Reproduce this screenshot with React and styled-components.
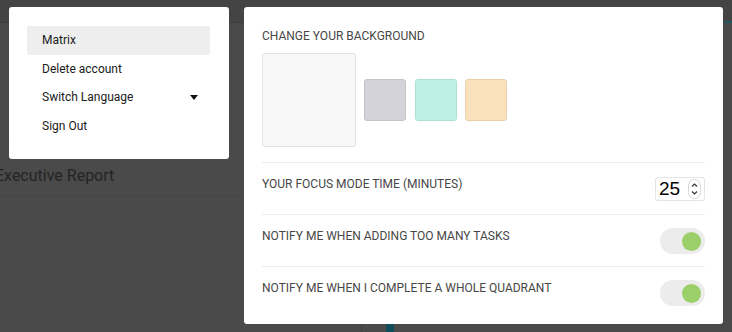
import React from 'react';
import styled, { createGlobalStyle } from 'styled-components';

const GlobalStyle = createGlobalStyle`
  html, body {
    margin: 0;
    padding: 0;
    background: #4a4a4a;
    font-family: Roboto, "Noto Sans", sans-serif;
    overflow: hidden;
  }
  * { box-sizing: border-box; }
`;

const Page = styled.div`
  width: 732px;
  height: 332px;
  position: relative;
  overflow: hidden;
  background: #4a4a4a;
`;

const Header = styled.div`
  height: 23px;
  background: #444444;
  border-bottom: 1px solid #3f3f3f;
  display: flex;
  justify-content: flex-end;
`;

const HeaderAccent = styled.div`
  width: 8px;
  height: 23px;
  border-bottom: 2px solid #1f5a60;
`;

const Body = styled.div`
  display: grid;
  grid-template-columns: 362px 1fr;
  height: 309px;
`;

const LeftColumn = styled.div`
  border-right: 1px solid #414141;
  display: flex;
  flex-direction: column;
  overflow: hidden;
`;

const Spacer = styled.div`
  height: 117px;
  border-bottom: 1px solid #464646;
`;

const ReportTitle = styled.h2`
  margin: 0 0 0 -5px;
  height: 56px;
  padding-top: 26px;
  font-size: 16px;
  font-weight: 400;
  line-height: 20px;
  color: #242424;
  border-bottom: 1px solid #444444;
`;

const RightColumn = styled.div`
  display: flex;
  align-items: flex-end;
  padding-left: 24px;
`;

const ChartBar = styled.div`
  width: 8px;
  height: 9px;
  background: #0f4d5c;
`;

const Overlay = styled.div`
  position: absolute;
  inset: 0;
  display: flex;
  align-items: flex-start;
  gap: 15px;
  padding: 7px 9px;
`;

const Menu = styled.div`
  width: 220px;
  height: 152px;
  background: #ffffff;
  border-radius: 3px;
  padding: 19px 19px 0 18px;
`;

const MenuItem = styled.div`
  height: 28.5px;
  display: flex;
  align-items: center;
  justify-content: space-between;
  padding: 0 12px 0 15px;
  border-radius: 2px;
  font-size: 12px;
  color: #212121;
  background: ${p => (p.$active ? '#eeeeee' : 'transparent')};
`;

const Caret = styled.span`
  width: 0;
  height: 0;
  border-left: 4px solid transparent;
  border-right: 4px solid transparent;
  border-top: 5px solid #111111;
`;

const Panel = styled.div`
  width: 479px;
  height: 317px;
  background: #ffffff;
  border-radius: 3px;
  padding: 22px 18px 6px;
`;

const SectionLabel = styled.div`
  font-size: 12px;
  line-height: 14px;
  color: #474747;
  text-transform: uppercase;
`;

const Swatches = styled.div`
  display: flex;
  align-items: center;
  gap: 8.5px;
  margin: 10px 0 15px;
`;

const Swatch = styled.div`
  width: ${p => (p.$large ? '93.5px' : '42px')};
  height: ${p => (p.$large ? '94px' : '42px')};
  border-radius: 3px;
  background: ${p => p.$color};
  border: 1px solid ${p => p.$border};
`;

const Row = styled.div`
  height: 52px;
  border-top: 1px solid #ececec;
  display: flex;
  align-items: center;
  justify-content: space-between;
`;

const RowLabel = styled(SectionLabel)`
  align-self: flex-start;
  margin-top: 14px;
`;

const NumberBox = styled.div`
  width: 50px;
  height: 24px;
  border: 1px solid #e4e4e4;
  border-radius: 3px;
  display: flex;
  align-items: center;
  justify-content: space-between;
  padding: 0 3px 0 3px;
  margin-top: 1px;
`;

const NumberValue = styled.span`
  font-family: "Liberation Sans", Arial, sans-serif;
  font-size: 19px;
  color: #000000;
`;

const Spinner = styled.svg`
  width: 13px;
  height: 20px;
`;

const Toggle = styled.div`
  width: 45px;
  height: 26px;
  border-radius: 13px;
  background: #ececec;
  display: flex;
  align-items: center;
  justify-content: ${p => (p.$on ? 'flex-end' : 'flex-start')};
  padding: 0 4px;
  margin-top: 1px;
`;

const Knob = styled.span`
  width: 19px;
  height: 19px;
  border-radius: 50%;
  background: ${p => (p.$on ? '#9bcf69' : '#bdbdbd')};
`;

const menuItems = [
  { label: 'Matrix', active: true },
  { label: 'Delete account' },
  { label: 'Switch Language', caret: true },
  { label: 'Sign Out' },
];

const swatches = [
  { color: '#d5d3da', border: '#c4c2ca' },
  { color: '#bdf0e6', border: '#aee0d6' },
  { color: '#f9e1bb', border: '#e9d0aa' },
];

const App = () => {
  return (
    <Page>
      <GlobalStyle />
      <Header>
        <HeaderAccent />
      </Header>
      <Body>
        <LeftColumn>
          <Spacer />
          <ReportTitle>Executive Report</ReportTitle>
        </LeftColumn>
        <RightColumn>
          <ChartBar />
        </RightColumn>
      </Body>

      <Overlay>
        <Menu>
          {menuItems.map(item => (
            <MenuItem key={item.label} $active={item.active}>
              {item.label}
              {item.caret && <Caret />}
            </MenuItem>
          ))}
        </Menu>

        <Panel>
          <SectionLabel>Change your background</SectionLabel>
          <Swatches>
            <Swatch $large $color="#f8f8f8" $border="#e2e2e2" />
            {swatches.map(s => (
              <Swatch key={s.color} $color={s.color} $border={s.border} />
            ))}
          </Swatches>

          <Row>
            <RowLabel>Your focus mode time (minutes)</RowLabel>
            <NumberBox>
              <NumberValue>25</NumberValue>
              <Spinner viewBox="0 0 13 20">
                <rect x="0.5" y="0.5" width="12" height="19" rx="6" fill="#fff" stroke="#d6d6d6" />
                <path d="M4 7.5 L6.5 5 L9 7.5" fill="none" stroke="#333" strokeWidth="1.2" />
                <path d="M4 12.5 L6.5 15 L9 12.5" fill="none" stroke="#333" strokeWidth="1.2" />
              </Spinner>
            </NumberBox>
          </Row>

          <Row>
            <RowLabel>Notify me when adding too many tasks</RowLabel>
            <Toggle $on>
              <Knob $on />
            </Toggle>
          </Row>

          <Row>
            <RowLabel>Notify me when I complete a whole quadrant</RowLabel>
            <Toggle $on>
              <Knob $on />
            </Toggle>
          </Row>
        </Panel>
      </Overlay>
    </Page>
  );
};

export default App;
